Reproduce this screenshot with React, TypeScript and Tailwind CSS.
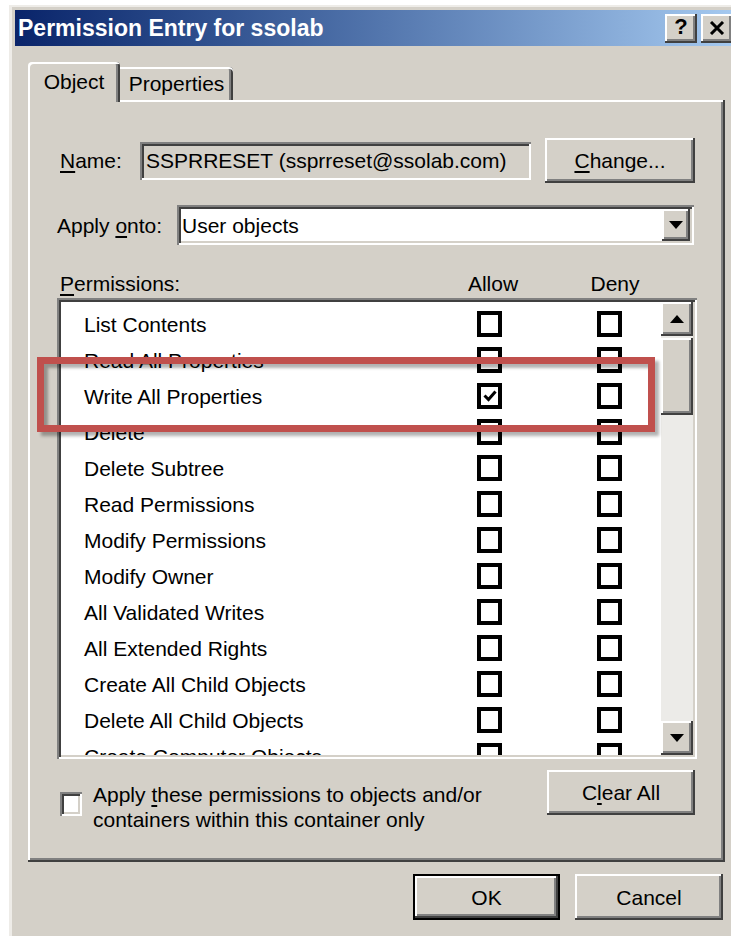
import React from 'react';

// classic 3D bevels
const raised =
  'shadow-[inset_-2px_-2px_0_#404040,inset_2px_2px_0_#ffffff,inset_-4px_-4px_0_#808080]';
const sunken =
  'shadow-[inset_2px_2px_0_#808080,inset_-2px_-2px_0_#ffffff,inset_4px_4px_0_#404040,inset_-4px_-4px_0_#d4d0c8]';

type Perm = { name: string; allow?: boolean };

const perms: Perm[] = [
  { name: 'List Contents' },
  { name: 'Read All Properties' },
  { name: 'Write All Properties', allow: true },
  { name: 'Delete' },
  { name: 'Delete Subtree' },
  { name: 'Read Permissions' },
  { name: 'Modify Permissions' },
  { name: 'Modify Owner' },
  { name: 'All Validated Writes' },
  { name: 'All Extended Rights' },
  { name: 'Create All Child Objects' },
  { name: 'Delete All Child Objects' },
  { name: 'Create Computer Objects' },
];

function Box({ checked }: { checked?: boolean }) {
  return (
    <div className="w-[25px] h-[26px] border-[4px] border-black bg-white flex items-center justify-center shrink-0">
      {checked && (
        <svg width="14" height="14" viewBox="0 0 14 14">
          <path d="M1.5 6.5 L5.5 10.5 L12.5 2.5" fill="none" stroke="#000" strokeWidth="3" />
        </svg>
      )}
    </div>
  );
}

function Arrow({ up }: { up?: boolean }) {
  return (
    <svg width="14" height="8" viewBox="0 0 14 8">
      {up ? <polygon points="7,0 14,8 0,8" fill="#000" /> : <polygon points="0,0 14,0 7,8" fill="#000" />}
    </svg>
  );
}

function Button({ children, className = '' }: { children?: React.ReactNode; className?: string }) {
  return (
    <div className={`bg-[#d4d0c8] flex items-center justify-center ${raised} ${className}`}>{children}</div>
  );
}

export default function App() {
  return (
    <div className="w-[731px] h-[937px] bg-white overflow-hidden pl-[9px] pt-[5px] font-['Liberation_Sans',Arial,sans-serif] text-[21px] text-black leading-none">
      <div className="relative w-[734px] h-[931px] bg-[#d4d0c8] border-l-[3px] border-t-[2px] border-[#eeece8] pl-[3px] pt-[3px]">
        {/* title bar */}
        <div className="w-[722px] h-[36px] flex items-center bg-gradient-to-r from-[#0a246a] to-[#a6caf0] pl-[3px] pr-[4px]">
          <span className="text-white font-bold text-[23px]">Permission Entry for ssolab</span>
          <div className="ml-auto flex gap-[4px]">
            <Button className="w-[32px] h-[29px] font-bold text-[22px] pb-[2px]">?</Button>
            <Button className="w-[32px] h-[29px]">
              <svg width="16" height="14" viewBox="0 0 16 14">
                <path d="M2 1 L14 13 M14 1 L2 13" stroke="#000" strokeWidth="3" />
              </svg>
            </Button>
          </div>
        </div>

        <div className="pl-[13px] mt-[16px]">
          {/* tabs */}
          <div className="flex items-end">
            <div className="relative z-10 w-[92px] h-[40px] bg-[#d4d0c8] rounded-t-[4px] shadow-[inset_2px_2px_0_#ffffff,inset_-2px_0_0_#404040,inset_-4px_0_0_#808080] flex items-center justify-center pb-[2px]">
              Object
            </div>
            <div className="w-[113px] h-[33px] mb-[2px] bg-[#d4d0c8] rounded-tr-[4px] shadow-[inset_0_2px_0_#ffffff,inset_-2px_0_0_#404040,inset_-4px_0_0_#808080] flex items-center justify-center">
              Properties
            </div>
          </div>

          {/* tab page */}
          <div className="-mt-[2px] w-[697px] h-[762px] shadow-[inset_-2px_-2px_0_#404040,inset_2px_2px_0_#ffffff,inset_-4px_-4px_0_#808080] pl-[29px] pt-[38px] flex flex-col">
            <div className="flex items-center h-[45px]">
              <span className="ml-[3px] w-[80px]">
                <u className="underline-offset-[3px]">N</u>ame:
              </span>
              <div className={`w-[391px] h-[38px] bg-[#d4d0c8] ${sunken} flex items-center pl-[6px]`}>
                SSPRRESET (ssprreset@ssolab.com)
              </div>
              <Button className="ml-[14px] w-[150px] h-[45px]">
                <span>
                  <u className="underline-offset-[3px]">C</u>hange...
                </span>
              </Button>
            </div>

            <div className="flex items-center h-[40px] mt-[22px]">
              <span className="w-[120px]">
                Apply <u className="underline-offset-[3px]">o</u>nto:
              </span>
              <div className={`w-[517px] h-[40px] bg-white ${sunken} flex items-center pl-[5px] pr-[4px]`}>
                <span>User objects</span>
                <Button className="ml-auto w-[28px] h-[32px]">
                  <Arrow />
                </Button>
              </div>
            </div>

            <div className="flex items-center h-[28px] mt-[24px]">
              <span className="ml-[3px] w-[406px]">
                <u className="underline-offset-[3px]">P</u>ermissions:
              </span>
              <span className="w-[54px] text-center">Allow</span>
              <span className="ml-[68px] w-[54px] text-center">Deny</span>
            </div>

            {/* permission list */}
            <div className={`mt-[1px] w-[640px] h-[461px] bg-white ${sunken} p-[4px] flex`}>
              <div className="flex-1 overflow-hidden pt-[4px]">
                {perms.map((p) => (
                  <div key={p.name} className="h-[36px] flex items-center">
                    <span className="pl-[23px] w-[416px]">{p.name}</span>
                    <Box checked={p.allow} />
                    <div className="ml-[95px]">
                      <Box />
                    </div>
                  </div>
                ))}
              </div>
              <div className="w-[32px] flex flex-col bg-[#ecebe8]">
                <Button className="h-[34px]">
                  <Arrow up />
                </Button>
                <Button className="h-[77px] mt-[2px]" />
                <div className="flex-1" />
                <Button className="h-[34px]">
                  <Arrow />
                </Button>
              </div>
            </div>

            <div className="flex mt-[11px]">
              <div className="flex items-start pt-[12px]">
                <div className={`ml-[3px] mt-[10px] w-[22px] h-[24px] bg-white ${sunken}`} />
                <div className="ml-[11px] leading-[25px]">
                  <div>
                    Apply <u className="underline-offset-[3px]">t</u>hese permissions to objects and/or
                  </div>
                  <div>containers within this container only</div>
                </div>
              </div>
              <Button className="ml-auto mr-[30px] w-[148px] h-[45px]">
                <span>
                  C<u className="underline-offset-[3px]">l</u>ear All
                </span>
              </Button>
            </div>
          </div>

          {/* dialog buttons */}
          <div className="w-[697px] flex justify-end gap-[15px] mt-[12px] pr-[2px]">
            <div className="w-[147px] h-[46px] border-2 border-black">
              <Button className="w-full h-full">OK</Button>
            </div>
            <Button className="w-[148px] h-[46px]">Cancel</Button>
          </div>
        </div>
      </div>

      {/* callout around the Write All Properties row */}
      <div className="absolute left-[37px] top-[357px] w-[618px] h-[75px] border-[7px] border-[#c0504d] shadow-[4px_4px_3px_rgba(0,0,0,0.3),inset_4px_4px_3px_rgba(0,0,0,0.3)]" />
    </div>
  );
}
